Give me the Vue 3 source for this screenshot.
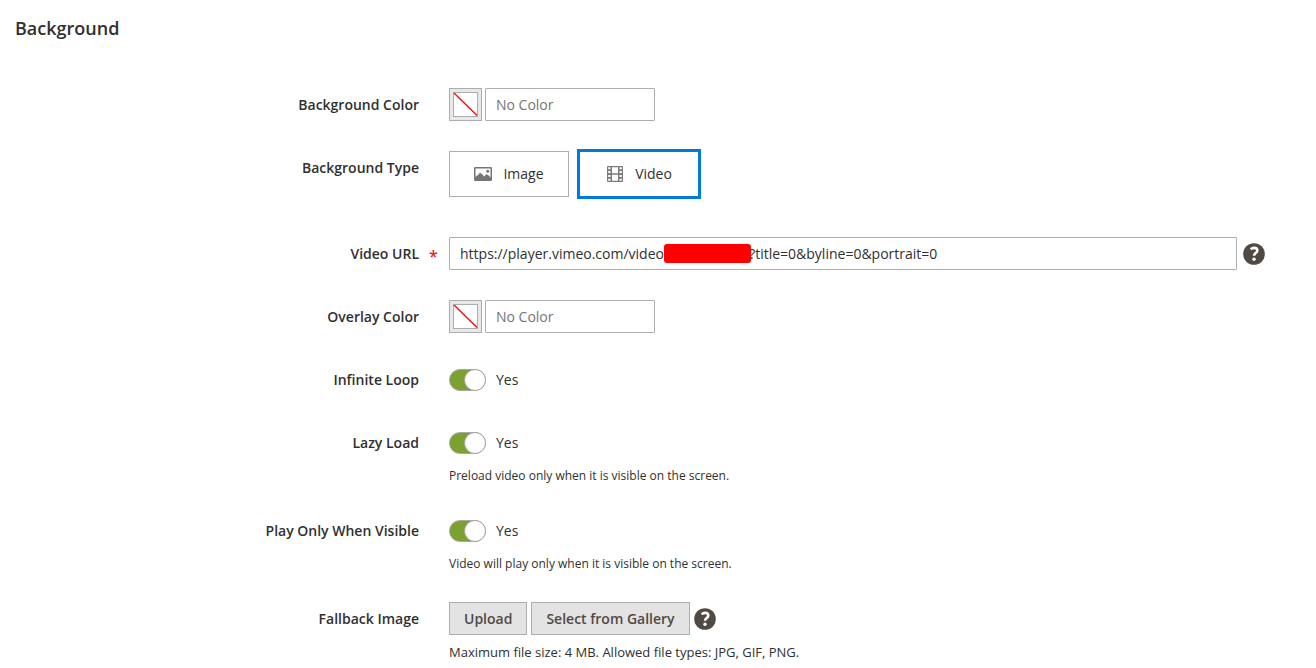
<script setup>
import { reactive, ref } from 'vue'

const backgroundColor = ref('')
const overlayColor = ref('')
const backgroundType = ref('video')
const hiddenId = '/' + '\u2007'.repeat(10)
const videoUrl = ref(`https://player.vimeo.com/video${hiddenId}?title=0&byline=0&portrait=0`)

const toggles = reactive([
  { id: 'infinite-loop', label: 'Infinite Loop', on: true, note: '' },
  { id: 'lazy-load', label: 'Lazy Load', on: true, note: 'Preload video only when it is visible on the screen.' },
  { id: 'play-visible', label: 'Play Only When Visible', on: true, note: 'Video will play only when it is visible on the screen.' },
])
</script>

<template>
  <form class="panel" @submit.prevent>
    <h2 class="title">Background</h2>

    <div class="field">
      <label class="label" for="background-color">Background Color</label>
      <div class="control color">
        <button class="swatch" type="button" aria-label="Pick background color">
          <svg viewBox="0 0 25 25"><rect x=".5" y=".5" width="24" height="24" /><path d="M1 1 24 23.5" /></svg>
        </button>
        <input id="background-color" v-model="backgroundColor" class="text short" type="text" placeholder="No Color">
      </div>
    </div>

    <div class="field">
      <span id="type-label" class="label">Background Type</span>
      <div class="control types" role="group" aria-labelledby="type-label">
        <button class="type" :class="{ active: backgroundType === 'image' }" type="button" @click="backgroundType = 'image'">
          <svg width="18" height="14" viewBox="0 0 18 14">
            <rect x=".75" y=".75" width="16.5" height="12.5" rx=".5" fill="none" stroke="#757575" stroke-width="1.5" />
            <path d="M1 10.5 3 8.3l.8.2L6 5.5l1 1 1 .5 2.2 2.6L12.5 7l1 .8 1.2.7L17 11v2.5H1Z" fill="#757575" />
            <circle cx="13.7" cy="4.3" r="1.5" fill="#757575" />
          </svg>
          Image
        </button>
        <button class="type" :class="{ active: backgroundType === 'video' }" type="button" @click="backgroundType = 'video'">
          <svg width="18" height="16" viewBox="-1 0 18 16">
            <path d="M0 1Q0 0 1 0h14q1 0 1 1v14q0 1-1 1H1q-1 0-1-1Z" fill="#7b7b7b" />
            <path d="M5 1.2h6v6H5ZM5 8.8h6v6H5Z" fill="#fff" />
            <path d="M1.2 1.2h2.3v2h-2.3Zm0 3.8h2.3v2h-2.3Zm0 4h2.3v2h-2.3Zm0 3.8h2.3v2h-2.3ZM12.5 1.2h2.3v2h-2.3Zm0 3.8h2.3v2h-2.3Zm0 4h2.3v2h-2.3Zm0 3.8h2.3v2h-2.3Z" fill="#fff" />
          </svg>
          Video
        </button>
      </div>
    </div>

    <div class="field">
      <label class="label required" for="video-url">Video URL</label>
      <div class="control with-help">
        <div class="url">
          <input id="video-url" v-model="videoUrl" class="text" type="text" required>
          <span class="redaction" aria-hidden="true"></span>
        </div>
        <button class="help" type="button" aria-label="Help with video URL">
          <svg viewBox="0 0 22 22"><circle cx="11" cy="11" r="10.8" fill="#514943" /><path d="M7.7 6.3c1-1 2-1.4 3.4-1.4 2 0 3.2 1 3.2 2.6 0 2.7-3.2 2.5-3.2 5.3" fill="none" stroke="#fff" stroke-width="2.6" /><circle cx="11" cy="16.3" r="1.7" fill="#fff" /></svg>
        </button>
      </div>
    </div>

    <div class="field">
      <label class="label" for="overlay-color">Overlay Color</label>
      <div class="control color">
        <button class="swatch" type="button" aria-label="Pick overlay color">
          <svg viewBox="0 0 25 25"><rect x=".5" y=".5" width="24" height="24" /><path d="M1 1 24 23.5" /></svg>
        </button>
        <input id="overlay-color" v-model="overlayColor" class="text short" type="text" placeholder="No Color">
      </div>
    </div>

    <div v-for="item in toggles" :key="item.id" class="field">
      <label class="label" :for="item.id">{{ item.label }}</label>
      <div class="control">
        <div class="toggle-line">
          <input :id="item.id" v-model="item.on" class="toggle" type="checkbox">
          <span>{{ item.on ? 'Yes' : 'No' }}</span>
        </div>
        <p v-if="item.note" class="note">{{ item.note }}</p>
      </div>
    </div>

    <div class="field">
      <span id="fallback-label" class="label">Fallback Image</span>
      <div class="control" role="group" aria-labelledby="fallback-label">
        <div class="uploader">
          <button class="action" type="button">Upload</button>
          <button class="action" type="button">Select from Gallery</button>
          <button class="help" type="button" aria-label="Help with fallback image">
            <svg viewBox="0 0 22 22"><circle cx="11" cy="11" r="10.8" fill="#514943" /><path d="M7.7 6.3c1-1 2-1.4 3.4-1.4 2 0 3.2 1 3.2 2.6 0 2.7-3.2 2.5-3.2 5.3" fill="none" stroke="#fff" stroke-width="2.6" /><circle cx="11" cy="16.3" r="1.7" fill="#fff" /></svg>
          </button>
        </div>
        <p class="note file-note">Maximum file size: 4 MB. Allowed file types: JPG, GIF, PNG.</p>
      </div>
    </div>
  </form>
</template>

<style>
body { margin: 0; background: #fff; }
</style>

<style scoped>
.panel {
  box-sizing: border-box;
  display: flex;
  flex-direction: column;
  gap: 30px;
  padding: 16px 51px 0 15px;
  color: #303030;
  font: 14px/20px "Open Sans", sans-serif;
}
.panel *, .panel *::before { box-sizing: border-box; }
.title { margin: 0 0 18px; font-size: 18px; line-height: 24px; font-weight: 600; }
.field { display: grid; grid-template-columns: 101fr 204fr; column-gap: 30px; }
.label { position: relative; justify-self: end; align-self: start; padding: 7px 0 6px; font-weight: 600; }
.required::after {
  content: "*";
  position: absolute;
  left: calc(100% + 10px);
  top: 9px;
  color: #e22626;
  font-size: 16px;
}
.control { min-width: 0; }
.color { display: flex; gap: 3px; }
.text {
  width: 100%;
  height: 33px;
  margin: 0;
  padding: 0 10px;
  border: 1px solid #adadad;
  border-radius: 1px;
  background: #fff;
  color: #303030;
  font: inherit;
}
.text::placeholder { color: #757575; opacity: 1; }
.text:focus { outline: 0; border-color: #007bdb; }
.short { width: 170px; }
.swatch { width: 33px; height: 33px; padding: 3px; border: 1px solid #adadad; background: #e8e8e8; }
.swatch svg { display: block; width: 25px; height: 25px; }
.swatch rect { fill: #fff; stroke: #adadad; }
.swatch path { fill: none; stroke: #f00; stroke-width: 1.3; }
.types { display: flex; gap: 10px; padding-bottom: 10px; }
.type {
  display: flex;
  align-items: center;
  justify-content: center;
  gap: 11px;
  width: 120px;
  height: 46px;
  padding: 0;
  border: 1px solid #adadad;
  background: #fff;
  color: #303030;
  font: inherit;
}
.active { border-color: #007bdb; box-shadow: 0 0 0 2px #007bdb; }
.with-help, .uploader { display: flex; align-items: center; }
.with-help { gap: 6px; }
.url { position: relative; flex: 1; }
.redaction { position: absolute; left: 215px; top: 7px; width: 87px; height: 19px; border-radius: 3px; background: #f00; }
.help { flex: none; width: 22px; height: 22px; padding: 0; border: 0; background: none; }
.help svg { display: block; width: 22px; height: 22px; }
.toggle-line { display: flex; align-items: center; gap: 10px; height: 33px; }
.toggle {
  appearance: none;
  position: relative;
  width: 37px;
  height: 22px;
  margin: 0;
  border: 1px solid #aaa6a0;
  border-radius: 11px;
  background: #fff;
}
.toggle:checked { background: #79a22e; }
.toggle::before {
  content: "";
  position: absolute;
  left: -1px;
  top: -1px;
  width: 22px;
  height: 22px;
  border: 1px solid #aaa6a0;
  border-radius: 50%;
  background: #fff;
}
.toggle:checked::before { left: 14px; }
.note { margin: 0; padding-top: 9px; font-size: 12px; line-height: 16px; }
.file-note { font-size: 13px; }
.uploader { gap: 4px; }
.action {
  height: 33px;
  padding: 0 14px;
  border: 1px solid #adadad;
  background: #e3e3e3;
  color: #514943;
  font: inherit;
  font-weight: 600;
}
</style>
